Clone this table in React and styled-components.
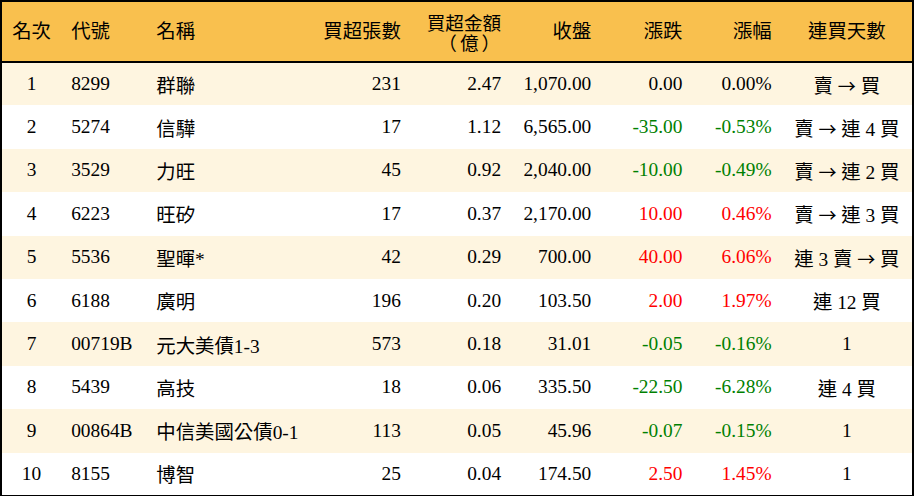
import React from 'react';
import styled, { createGlobalStyle } from 'styled-components';

const GlobalStyle = createGlobalStyle`
  html, body {
    margin: 0;
    padding: 0;
    background: #ffffff;
  }
  body {
    font-family: 'Liberation Serif', 'Noto Sans CJK TC', serif;
  }
`;

const COLUMNS = [
  { key: 'rank', title: '名次', width: 60, align: 'center' },
  { key: 'code', title: '代號', width: 85, align: 'left' },
  { key: 'name', title: '名稱', width: 164, align: 'left' },
  { key: 'lots', title: '買超張數', width: 100, align: 'right' },
  { key: 'amount', title: '買超金額（億）', width: 100, align: 'right', wrap: true },
  { key: 'close', title: '收盤', width: 90, align: 'right' },
  { key: 'change', title: '漲跌', width: 91, align: 'right' },
  { key: 'pct', title: '漲幅', width: 89, align: 'right' },
  { key: 'streak', title: '連買天數', width: 131, align: 'center' },
];

const ROWS = [
  ['1', '8299', '群聯', '231', '2.47', '1,070.00', '0.00', '0.00%', '賣 → 買'],
  ['2', '5274', '信驊', '17', '1.12', '6,565.00', '-35.00', '-0.53%', '賣 → 連 4 買'],
  ['3', '3529', '力旺', '45', '0.92', '2,040.00', '-10.00', '-0.49%', '賣 → 連 2 買'],
  ['4', '6223', '旺矽', '17', '0.37', '2,170.00', '10.00', '0.46%', '賣 → 連 3 買'],
  ['5', '5536', '聖暉*', '42', '0.29', '700.00', '40.00', '6.06%', '連 3 賣 → 買'],
  ['6', '6188', '廣明', '196', '0.20', '103.50', '2.00', '1.97%', '連 12 買'],
  ['7', '00719B', '元大美債1-3', '573', '0.18', '31.01', '-0.05', '-0.16%', '1'],
  ['8', '5439', '高技', '18', '0.06', '335.50', '-22.50', '-6.28%', '連 4 買'],
  ['9', '00864B', '中信美國公債0-1', '113', '0.05', '45.96', '-0.07', '-0.15%', '1'],
  ['10', '8155', '博智', '25', '0.04', '174.50', '2.50', '1.45%', '1'],
];

const toneOf = (value) => {
  const n = parseFloat(value);
  if (n > 0) return 'up';
  if (n < 0) return 'down';
  return 'flat';
};

const TONES = {
  up: '#ff0000',
  down: '#008000',
  flat: '#000000',
};

const Table = styled.table`
  width: 914px;
  border-collapse: collapse;
  table-layout: fixed;
  border: 2px solid #000;
  font-family: 'Liberation Serif', 'Noto Sans CJK TC', serif;
  font-size: 19.4px;
  color: #000;
`;

const HeadRow = styled.tr`
  height: 61px;
  background-color: #f9c04e;
`;

const HeadCell = styled.th`
  font-weight: normal;
  text-align: ${({ $align }) => $align};
  padding: 0 10px;
  line-height: 20px;
  border-bottom: 2px solid #000;
  white-space: nowrap;
  vertical-align: middle;
`;

const TitleLine = styled.span`
  display: block;
  font-family: 'Noto Sans CJK TC', serif;
  font-size: 18.6px;
  line-height: 20px;
  letter-spacing: ${({ $spread }) => ($spread ? '3px' : '0')};
  margin-right: ${({ $spread }) => ($spread ? '-2px' : '0')};
`;

const Row = styled.tr`
  height: 43.4px;
  background-color: ${({ $shade }) => ($shade ? '#fef5e0' : '#ffffff')};
`;

const Cell = styled.td`
  text-align: ${({ $align }) => $align};
  padding: 0 10px;
  white-space: nowrap;
  vertical-align: middle;
  color: ${({ $tone }) => TONES[$tone] || '#000'};
`;

const Arrow = styled.span`
  font-family: 'Noto Sans CJK TC', sans-serif;
  font-size: 18px;
`;

const renderStreak = (text) => {
  const parts = text.split('→');
  if (parts.length === 1) return text;
  return (
    <>
      {parts[0]}
      <Arrow>→</Arrow>
      {parts[1]}
    </>
  );
};

const App = () => {
  return (
    <>
      <GlobalStyle />
      <Table>
        <colgroup>
          {COLUMNS.map((col) => (
            <col key={col.key} style={{ width: col.width }} />
          ))}
        </colgroup>
        <thead>
          <HeadRow>
            {COLUMNS.map((col) => (
              <HeadCell key={col.key} $align={col.align}>
                {col.wrap ? (
                  <>
                    <TitleLine>買超金額</TitleLine>
                    <TitleLine $spread>（億）</TitleLine>
                  </>
                ) : (
                  col.title
                )}
              </HeadCell>
            ))}
          </HeadRow>
        </thead>
        <tbody>
          {ROWS.map((row, i) => (
            <Row key={row[0]} $shade={i % 2 === 0}>
              {row.map((value, j) => {
                const col = COLUMNS[j];
                const tone = col.key === 'change' || col.key === 'pct' ? toneOf(value) : 'flat';
                return (
                  <Cell key={col.key} $align={col.align} $tone={tone}>
                    {col.key === 'streak' ? renderStreak(value) : value}
                  </Cell>
                );
              })}
            </Row>
          ))}
        </tbody>
      </Table>
    </>
  );
};

export default App;
